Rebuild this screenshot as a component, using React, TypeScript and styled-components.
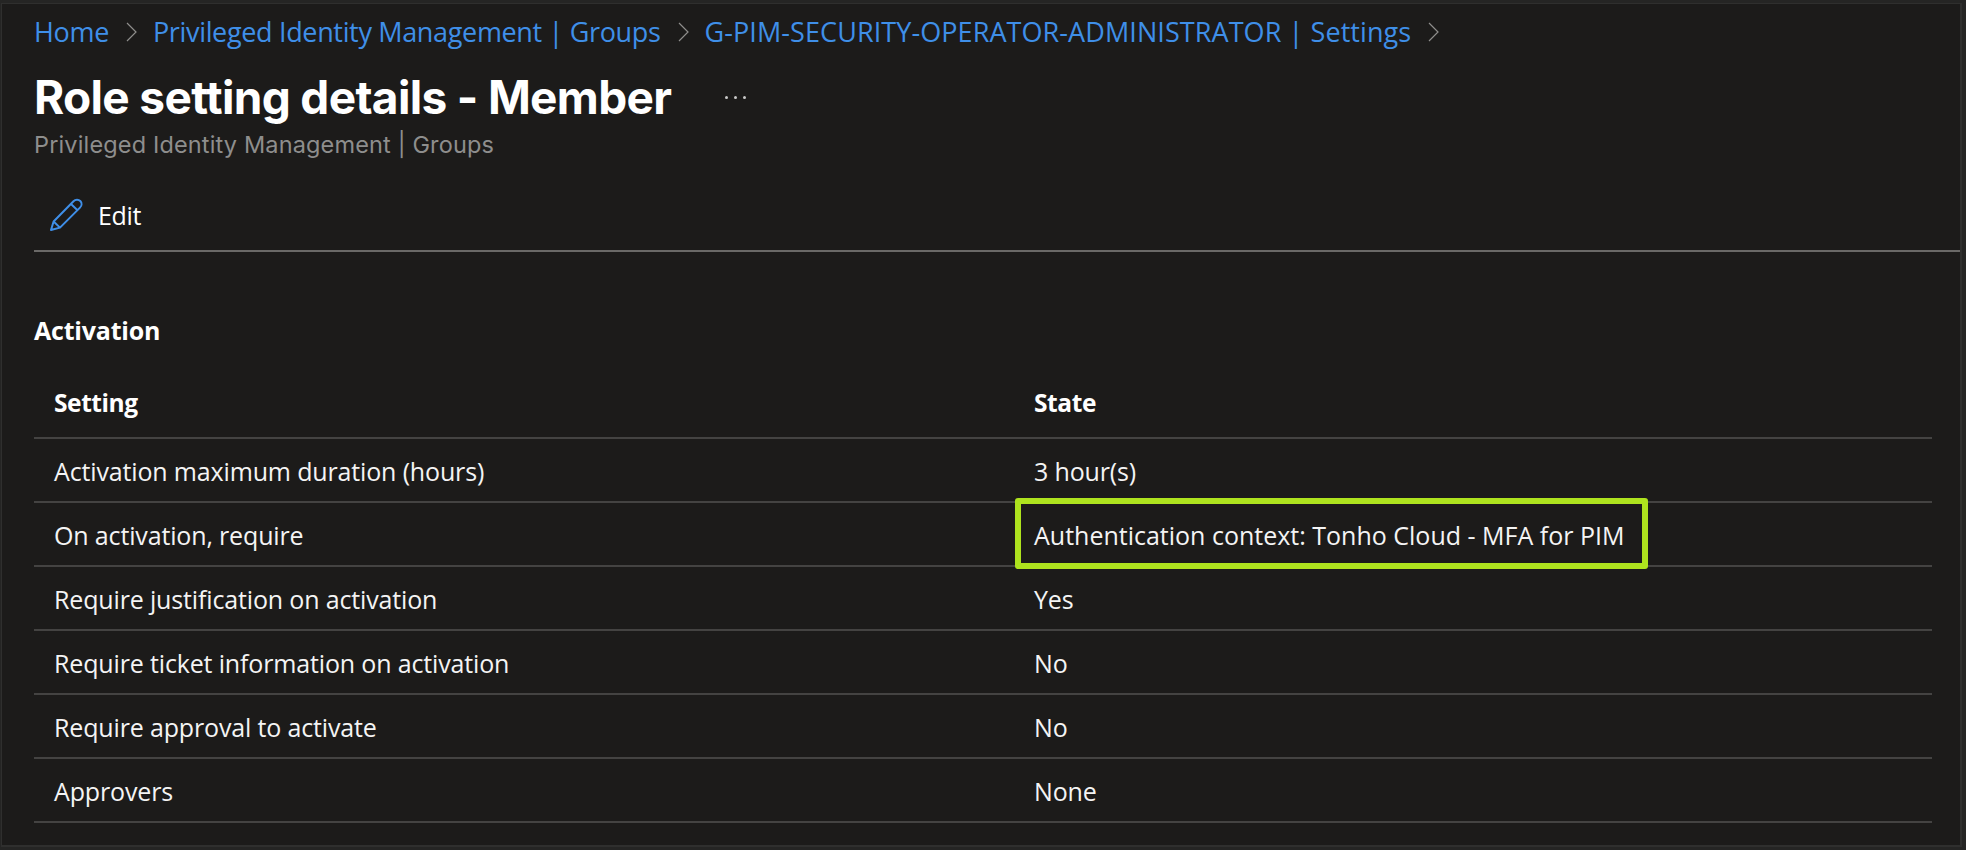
import React from "react";
import styled, { createGlobalStyle } from "styled-components";

const Global = createGlobalStyle`
  html, body { margin: 0; padding: 0; background: #2a2a29; }
  #root { width: 1966px; height: 850px; overflow: hidden; }
`;

const Frame = styled.div`
  box-sizing: border-box;
  width: 1966px;
  height: 850px;
  padding: 3px 4px 3px 0;
  background: #252524;
  font-family: "Open Sans", "Noto Sans", sans-serif;
`;

const Panel = styled.main`
  box-sizing: border-box;
  height: 100%;
  margin-left: 1px;
  background: #1c1b1a;
  border-top: 1px solid #2f2f2e;
  border-left: 1px solid #2f2f2e;
  border-right: 2px solid #2f2f2e;
  border-bottom: 2px solid #2f2f2e;
  padding: 12px 0 0 32px;
  color: #fff;
  display: flex;
  flex-direction: column;
`;

const Breadcrumb = styled.nav`
  display: flex;
  align-items: center;
  height: 32px;
`;

const Crumb = styled.a<{ $spacing: number }>`
  color: #3f8fe8;
  font-size: 27px;
  letter-spacing: ${(p) => p.$spacing}px;
  line-height: 32px;
  white-space: nowrap;
`;

const ChevronWrap = styled.svg`
  width: 13px;
  height: 20px;
  margin: 0 15px 0 16px;
  flex: none;
`;

const Chevron = () => (
  <ChevronWrap viewBox="0 0 13 20">
    <path d="M2 1 L11 10 L2 19" fill="none" stroke="#8f8e8c" strokeWidth="1.2" />
  </ChevronWrap>
);

const TitleRow = styled.div`
  display: flex;
  align-items: center;
  height: 58px;
  margin-top: 20px;
`;

const Title = styled.h1`
  margin: 0;
  font-family: Inter, "Liberation Sans", sans-serif;
  font-size: 46px;
  font-weight: 700;
  letter-spacing: -0.66px;
  line-height: 58px;
  white-space: nowrap;
`;

const More = styled.span`
  display: flex;
  gap: 6px;
  margin-left: 54px;
  & > i {
    width: 3px;
    height: 3px;
    background: #c9c9c9;
    border-radius: 50%;
  }
`;

const Subtitle = styled.div`
  font-family: Inter, "Liberation Sans", sans-serif;
  font-size: 23.5px;
  line-height: 28px;
  color: #8e8e8d;
  letter-spacing: 0.15px;
  margin-top: 5px;
`;

const Toolbar = styled.div`
  display: flex;
  align-items: center;
  height: 70px;
  margin-top: 21px;
  padding-left: 15px;
  border-bottom: 2px solid #6a6967;
`;

const EditLabel = styled.span`
  font-size: 25px;
  margin-left: 15px;
  color: #fff;
  letter-spacing: -0.3px;
`;

const PencilIcon = () => (
  <svg width="34" height="34" viewBox="0 0 34 34">
    <path
      d="M2 32 L4.6 23.5 L24.5 3.2 C26.5 1.2 29.5 1.2 31.3 3 C33 4.8 33 7.6 31 9.6 L11 29.6 Z M4.6 23.5 L11 29.6 M22 6 L28.5 12.2"
      fill="none"
      stroke="#3f8fe8"
      strokeWidth="2"
      strokeLinejoin="round"
    />
  </svg>
);

const SectionTitle = styled.h2`
  margin: 63px 0 0;
  font-size: 25px;
  font-weight: 700;
  line-height: 30px;
  letter-spacing: -0.2px;
`;

const Table = styled.div`
  margin-top: 22px;
  margin-right: 28px;
  display: flex;
  flex-direction: column;
`;

const Row = styled.div`
  display: grid;
  grid-template-columns: 980px 1fr;
  align-items: center;
  height: 60px;
  padding: 2px 0 0 20px;
  border-bottom: 2px solid #444342;
  font-size: 25px;
  letter-spacing: -0.15px;
  color: #f4f4f4;
`;

const HeadRow = styled(Row)`
  height: 70px;
  padding-top: 0;
  font-weight: 700;
  color: #fff;
  font-size: 24.5px;
  letter-spacing: -0.42px;
`;

const Cell = styled.div<{ $marked?: boolean }>`
  position: relative;
  white-space: nowrap;
  letter-spacing: ${(p) => (p.$marked ? "0" : "inherit")};
`;

const Highlight = styled.div`
  position: absolute;
  left: -19px;
  top: -20px;
  width: 633px;
  height: 71px;
  box-sizing: border-box;
  border: 6px solid #aee31e;
  border-radius: 3px;
`;

const rows: { setting: string; state: string; mark?: boolean }[] = [
  { setting: "Activation maximum duration (hours)", state: "3 hour(s)" },
  { setting: "On activation, require", state: "Authentication context: Tonho Cloud - MFA for PIM", mark: true },
  { setting: "Require justification on activation", state: "Yes" },
  { setting: "Require ticket information on activation", state: "No" },
  { setting: "Require approval to activate", state: "No" },
  { setting: "Approvers", state: "None" },
];

export default function App() {
  return (
    <>
      <Global />
      <Frame>
        <Panel>
          <Breadcrumb>
            <Crumb $spacing={-0.34}>Home</Crumb>
            <Chevron />
            <Crumb $spacing={-0.34}>Privileged Identity Management | Groups</Crumb>
            <Chevron />
            <Crumb $spacing={0.08}>G-PIM-SECURITY-OPERATOR-ADMINISTRATOR | Settings</Crumb>
            <Chevron />
          </Breadcrumb>
          <TitleRow>
            <Title>Role setting details - Member</Title>
            <More>
              <i />
              <i />
              <i />
            </More>
          </TitleRow>
          <Subtitle>Privileged Identity Management | Groups</Subtitle>
          <Toolbar>
            <PencilIcon />
            <EditLabel>Edit</EditLabel>
          </Toolbar>
          <SectionTitle>Activation</SectionTitle>
          <Table>
            <HeadRow>
              <Cell>Setting</Cell>
              <Cell>State</Cell>
            </HeadRow>
            {rows.map((r) => (
              <Row key={r.setting}>
                <Cell>{r.setting}</Cell>
                <Cell $marked={r.mark}>
                  {r.state}
                  {r.mark && <Highlight />}
                </Cell>
              </Row>
            ))}
          </Table>
        </Panel>
      </Frame>
    </>
  );
}
